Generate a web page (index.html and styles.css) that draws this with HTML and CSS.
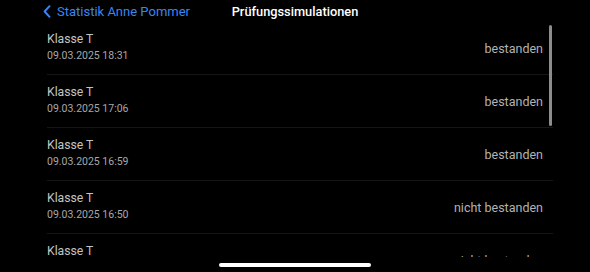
FILE: index.html
```html
<!DOCTYPE html>
<html lang="de">
<head>
  <meta charset="UTF-8" />
  <meta name="viewport" content="width=device-width, initial-scale=1.0"/>
  <title>Prüfungssimulationen</title>
  <link rel="stylesheet" href="styles.css">
</head>
<body>
  <div class="screen">
    <div class="navbar">
      <a class="back" href="#">
        <svg class="chevron" width="8" height="13" viewBox="0 0 8 13">
          <path d="M6.5 1.2 L1.6 6.5 L6.5 11.8" fill="none" stroke="currentColor" stroke-width="1.9" stroke-linecap="round" stroke-linejoin="round"/>
        </svg>
        <span>Statistik Anne Pommer</span>
      </a>
      <div class="title">Prüfungssimulationen</div>
      <div></div>
    </div>

    <div class="list">
      <div class="row">
        <div class="info">
          <div class="name">Klasse T</div>
          <div class="date">09.03.2025 18:31</div>
        </div>
        <div class="result">bestanden</div>
      </div>
      <div class="row">
        <div class="info">
          <div class="name">Klasse T</div>
          <div class="date">09.03.2025 17:06</div>
        </div>
        <div class="result">bestanden</div>
      </div>
      <div class="row">
        <div class="info">
          <div class="name">Klasse T</div>
          <div class="date">09.03.2025 16:59</div>
        </div>
        <div class="result">bestanden</div>
      </div>
      <div class="row">
        <div class="info">
          <div class="name">Klasse T</div>
          <div class="date">09.03.2025 16:50</div>
        </div>
        <div class="result">nicht bestanden</div>
      </div>
      <div class="row">
        <div class="info">
          <div class="name">Klasse T</div>
          <div class="date">09.03.2025 16:42</div>
        </div>
        <div class="result">nicht bestanden</div>
      </div>
      <div class="scrollbar"></div>
    </div>

    <div class="home">
      <div class="home-bar"></div>
    </div>
  </div>
</body>
</html>
```

FILE: styles.css
```css
body {
  margin: 0;
  background-color: #000;
  font-family: Roboto, "Noto Sans", Arial, sans-serif;
  -webkit-font-smoothing: antialiased;
}

.screen {
  width: 590px;
  height: 272px;
  overflow: hidden;
  display: flex;
  flex-direction: column;
}

.navbar {
  height: 22px;
  display: grid;
  grid-template-columns: 1fr auto 1fr;
  align-items: center;
}

.back {
  display: flex;
  align-items: center;
  gap: 6px;
  padding-left: 43px;
  color: #3a85f2;
  text-decoration: none;
  font-size: 13px;
  white-space: nowrap;
  min-width: 0;
}

.chevron {
  display: block;
}

.title {
  color: #fff;
  font-size: 12.8px;
  font-weight: 500;
}

.list {
  position: relative;
  height: 235px;
  overflow: hidden;
  margin-left: 47px;
  width: 506px;
}

.row {
  height: 53px;
  display: flex;
  align-items: center;
  justify-content: space-between;
  border-bottom: 1px solid #161618;
  box-sizing: border-box;
  padding-right: 10px;
}

.info {
  display: flex;
  flex-direction: column;
  gap: 3px;
  margin-top: -2px;
}

.name {
  color: #c4c4c4;
  font-size: 12.2px;
}

.date {
  color: #a8a8a8;
  font-size: 10.5px;
}

.result {
  color: #b3b3b3;
  font-size: 12.5px;
}

.scrollbar {
  position: absolute;
  top: 3px;
  right: 1px;
  width: 3px;
  height: 101px;
  border-radius: 2px;
  background-color: #8d8d8d;
}

.home {
  flex: 1;
  display: flex;
  justify-content: center;
  padding-top: 6px;
}

.home-bar {
  width: 152px;
  height: 4px;
  border-radius: 2px;
  background-color: #fff;
}
```
